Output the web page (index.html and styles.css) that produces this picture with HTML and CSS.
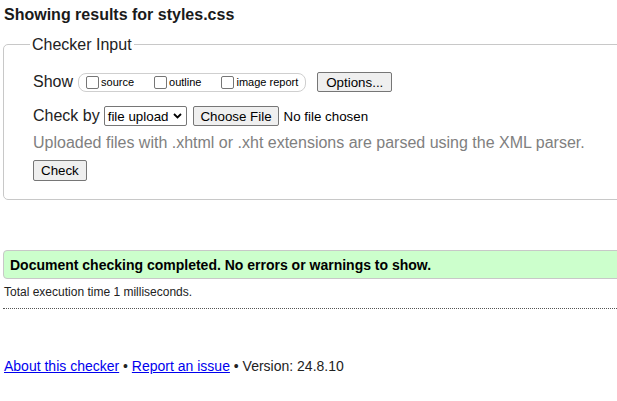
FILE: index.html
```html
<!DOCTYPE html>
<html lang="en">
<head>
<meta charset="utf-8">
<title>Showing results for styles.css - Nu Html Checker</title>
<link rel="stylesheet" href="styles.css">
</head>
<body>
<div class="page">
  <h2 class="title">Showing results for styles.css</h2>
  <form class="form">
    <fieldset class="checker">
      <legend class="legend">Checker Input</legend>
      <div class="row row-show">
        <span class="label">Show</span>
        <span class="opts">
          <label class="opt"><span class="cb"></span>source</label>
          <label class="opt"><span class="cb"></span>outline</label>
          <label class="opt"><span class="cb"></span>image report</label>
        </span>
        <span class="btn btn-options">Options...</span>
      </div>
      <div class="row row-by">
        <span class="label">Check by</span>
        <span class="select">file upload<svg class="chev" width="9" height="6" viewBox="0 0 9 6"><polyline points="1,1 4.5,4.5 8,1" fill="none" stroke="#000" stroke-width="1.8"/></svg></span>
        <span class="btn btn-file">Choose File</span>
        <span class="nofile">No file chosen</span>
      </div>
      <p class="hint">Uploaded files with .xhtml or .xht extensions are parsed using the XML parser.</p>
      <div class="row row-submit">
        <span class="btn btn-check">Check</span>
      </div>
    </fieldset>
  </form>
  <div class="success">Document checking completed. No errors or warnings to show.</div>
  <p class="time">Total execution time 1 milliseconds.</p>
  <hr class="sep">
  <p class="footer"><a class="link" href="#about">About this checker</a> • <a class="link" href="#issue">Report an issue</a> • Version: 24.8.10</p>
</div>
</body>
</html>
```

FILE: styles.css
```css
html {
  overflow: hidden;
  background: #fff;
}
body {
  margin: 0;
  font-family: "Liberation Sans", Arial, sans-serif;
  color: #000;
}
.page {
  width: 700px;
  padding-left: 3px;
}
.title {
  margin: 0;
  padding: 6px 0 0 1px;
  font-size: 16px;
  line-height: 18px;
  font-weight: bold;
  color: #1a1a1a;
}
.form {
  margin: 11px 0 0 0;
}
.checker {
  margin: 0;
  border: 1px solid #c8c8c8;
  border-radius: 5px;
  padding: 18px 0 18px 29px;
  min-width: 0;
}
.legend {
  font-size: 16px;
  line-height: 19px;
  padding: 0 2px;
  margin-left: -3px;
  color: #222;
}
.row {
  display: flex;
  align-items: center;
}
.row-show {
  height: 20px;
}
.label {
  font-size: 16px;
  line-height: 18px;
  color: #222;
}
.opts {
  display: flex;
  align-items: center;
  height: 17px;
  margin-left: 5px;
  border: 1px solid #cfcfcf;
  border-radius: 8px;
  padding: 0 7px 0 7px;
}
.opt {
  display: flex;
  align-items: center;
  font-size: 11px;
  line-height: 13px;
  margin-right: 20px;
  color: #000;
}
.opt:last-child {
  margin-right: 0;
}
.cb {
  width: 11px;
  height: 11px;
  border: 1px solid #767676;
  border-radius: 2px;
  margin-right: 2px;
  background: #fff;
}
.btn {
  display: inline-flex;
  align-items: center;
  box-sizing: border-box;
  height: 20px;
  border: 1px solid #767676;
  border-radius: 2px;
  background: #efefef;
  font-size: 13.333px;
  color: #000;
  padding: 0 6px;
}
.btn-options {
  margin-left: 11px;
  padding: 0 8px;
}
.row-by {
  margin-top: 14px;
  height: 20px;
}
.select {
  display: inline-flex;
  align-items: center;
  box-sizing: border-box;
  height: 20px;
  margin-left: 4px;
  border: 1px solid #767676;
  border-radius: 2px;
  padding: 0 4px 0 3px;
  font-size: 13.333px;
  background: #fff;
}
.chev {
  margin-left: 5px;
}
.btn-file {
  margin-left: 6px;
}
.nofile {
  margin-left: 5px;
  font-size: 13.333px;
}
.hint {
  margin: 8px 0 0 0;
  font-size: 16px;
  line-height: 18px;
  color: #808080;
}
.row-submit {
  margin-top: 8px;
}
.btn-check {
  height: 21px;
  padding: 0 7px;
}
.success {
  margin-top: 50px;
  border: 1px solid #c8c8c8;
  border-radius: 4px;
  background: #ccffcc;
  padding: 6px 0 5px 6px;
  font-size: 14px;
  line-height: 16px;
  font-weight: bold;
  color: #000;
}
.time {
  margin: 6px 0 0 1px;
  font-size: 12px;
  line-height: 14px;
  color: #222;
}
.sep {
  margin: 9px 0 0 0;
  border: 0;
  border-top: 1px dotted #555;
  height: 0;
}
.footer {
  margin: 49px 0 0 1px;
  font-size: 14px;
  line-height: 16px;
  color: #222;
}
.link {
  color: #0000ee;
}
```
